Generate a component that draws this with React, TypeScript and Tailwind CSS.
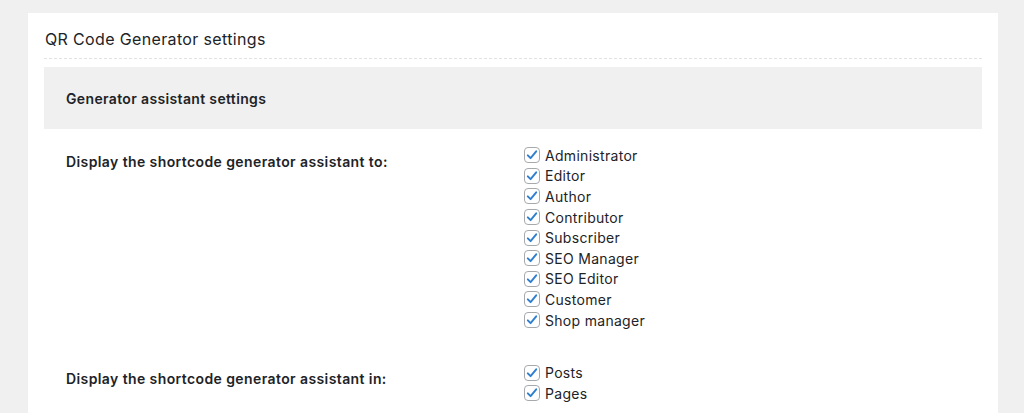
const roles = [
  'Administrator',
  'Editor',
  'Author',
  'Contributor',
  'Subscriber',
  'SEO Manager',
  'SEO Editor',
  'Customer',
  'Shop manager',
];

const places = ['Posts', 'Pages'];

function Check({ label }: { label: string }) {
  return (
    <label className="flex h-[20.6px] items-center gap-[5px] text-[14px] tracking-[0.3px] text-[#1d2327]">
      <span className="flex h-4 w-4 items-center justify-center rounded-[4px] border border-[#a7aaad] bg-white">
        <svg viewBox="0 0 16 16" className="h-[14px] w-[14px]">
          <path d="M3.2 8.4 L6.4 11.6 L12.8 3.8" fill="none" stroke="#2f7fd0" strokeWidth="2.2" strokeLinecap="round" strokeLinejoin="round" />
        </svg>
      </span>
      {label}
    </label>
  );
}

function Row({ title, items, first }: { title: string; items: string[]; first?: boolean }) {
  return (
    <div className={`flex pl-[22px] ${first ? 'pt-4 pb-4' : 'pt-4'}`}>
      <div className="w-[458px] pt-[7px] text-[14px] font-semibold leading-[20px] tracking-[0.4px] text-[#1d2327]">{title}</div>
      <div className="flex flex-col">
        {items.map((i) => (
          <Check key={i} label={i} />
        ))}
      </div>
    </div>
  );
}

export default function App() {
  return (
    <div className="h-[413px] overflow-hidden bg-[#f0f0f0] pt-[13px] pl-[28px] pr-[26px]" style={{ fontFamily: 'Inter, "Noto Sans", sans-serif' }}>
      <div className="h-[420px] bg-white px-4">
        <div className="flex h-[46px] items-center border-b border-dashed border-[#e2e2e4] pt-[6px] pl-px text-[16px] tracking-[0.35px] text-[#1d2327]">
          QR Code Generator settings
        </div>
        <div className="mt-2 flex h-[62px] items-center bg-[#f0f0f0] pl-[22px] text-[14px] font-semibold tracking-[0.35px] text-[#1d2327]">
          Generator assistant settings
        </div>
        <Row title="Display the shortcode generator assistant to:" items={roles} first />
        <Row title="Display the shortcode generator assistant in:" items={places} />
      </div>
    </div>
  );
}
